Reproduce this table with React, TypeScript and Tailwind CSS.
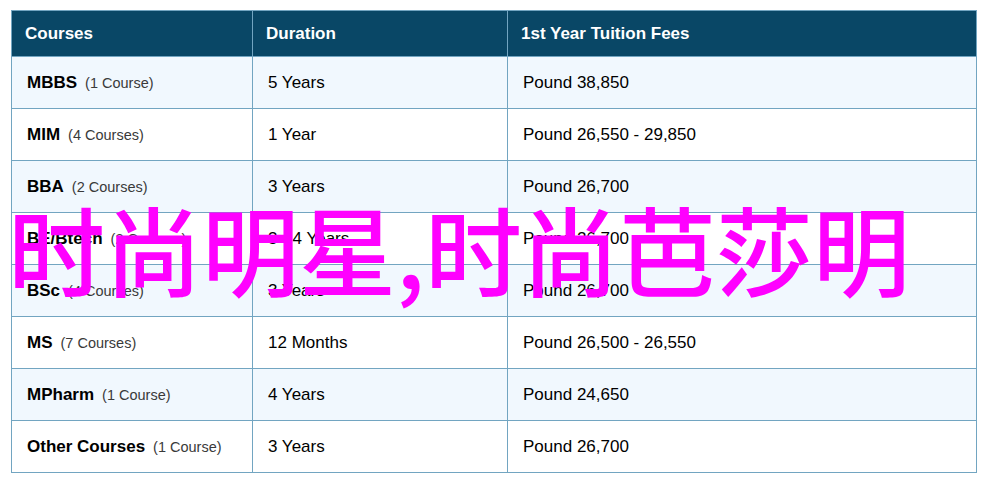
import React from "react";

const rows: { name: string; count: string; duration: string; fee: string }[] = [
  { name: "MBBS", count: "(1 Course)", duration: "5 Years", fee: "Pound 38,850" },
  { name: "MIM", count: "(4 Courses)", duration: "1 Year", fee: "Pound 26,550 - 29,850" },
  { name: "BBA", count: "(2 Courses)", duration: "3 Years", fee: "Pound 26,700" },
  { name: "BE/Btech", count: "(2 Courses)", duration: "3 - 4 Years", fee: "Pound 26,700" },
  { name: "BSc", count: "(4 Courses)", duration: "3 Years", fee: "Pound 26,700" },
  { name: "MS", count: "(7 Courses)", duration: "12 Months", fee: "Pound 26,500 - 26,550" },
  { name: "MPharm", count: "(1 Course)", duration: "4 Years", fee: "Pound 24,650" },
  { name: "Other Courses", count: "(1 Course)", duration: "3 Years", fee: "Pound 26,700" },
];

export default function App() {
  return (
    <div className="relative w-[984px] h-[483px] bg-white overflow-hidden" style={{ fontFamily: '"Liberation Sans", Arial, sans-serif' }}>
      <div className="pt-[10px] pl-[11px]">
        <table className="w-[965px] table-fixed border-collapse border border-[#72a5c1] text-[17px] text-black">
          <colgroup>
            <col className="w-[241px]" />
            <col className="w-[255px]" />
            <col className="w-[469px]" />
          </colgroup>
          <thead>
            <tr className="h-[46px] bg-[#094766] text-white">
              <th className="border border-[#72a5c1] pl-[13px] text-left font-bold">Courses</th>
              <th className="border border-[#72a5c1] pl-[13px] text-left font-bold">Duration</th>
              <th className="border border-[#72a5c1] pl-[13px] text-left font-bold">1st Year Tuition Fees</th>
            </tr>
          </thead>
          <tbody>
            {rows.map((r, i) => (
              <tr key={r.name} className={`h-[52px] ${i % 2 === 0 ? "bg-[#f1f8fe]" : "bg-white"}`}>
                <td className="border border-[#72a5c1] pl-[15px]">
                  <span className="font-bold">{r.name}</span>
                  <span className="ml-[8px] text-[14.5px] text-[#3a3a3a]">{r.count}</span>
                </td>
                <td className="border border-[#72a5c1] pl-[15px]">{r.duration}</td>
                <td className="border border-[#72a5c1] pl-[15px]">{r.fee}</td>
              </tr>
            ))}
          </tbody>
        </table>
      </div>
      <div
        className="absolute left-[8px] top-[198px] text-[97px] leading-none font-medium text-[#ff00ff] whitespace-nowrap"
        style={{ fontFamily: '"Noto Sans CJK SC", "Noto Sans", sans-serif' }}
      >
        时尚明星,时尚芭莎明
      </div>
    </div>
  );
}
